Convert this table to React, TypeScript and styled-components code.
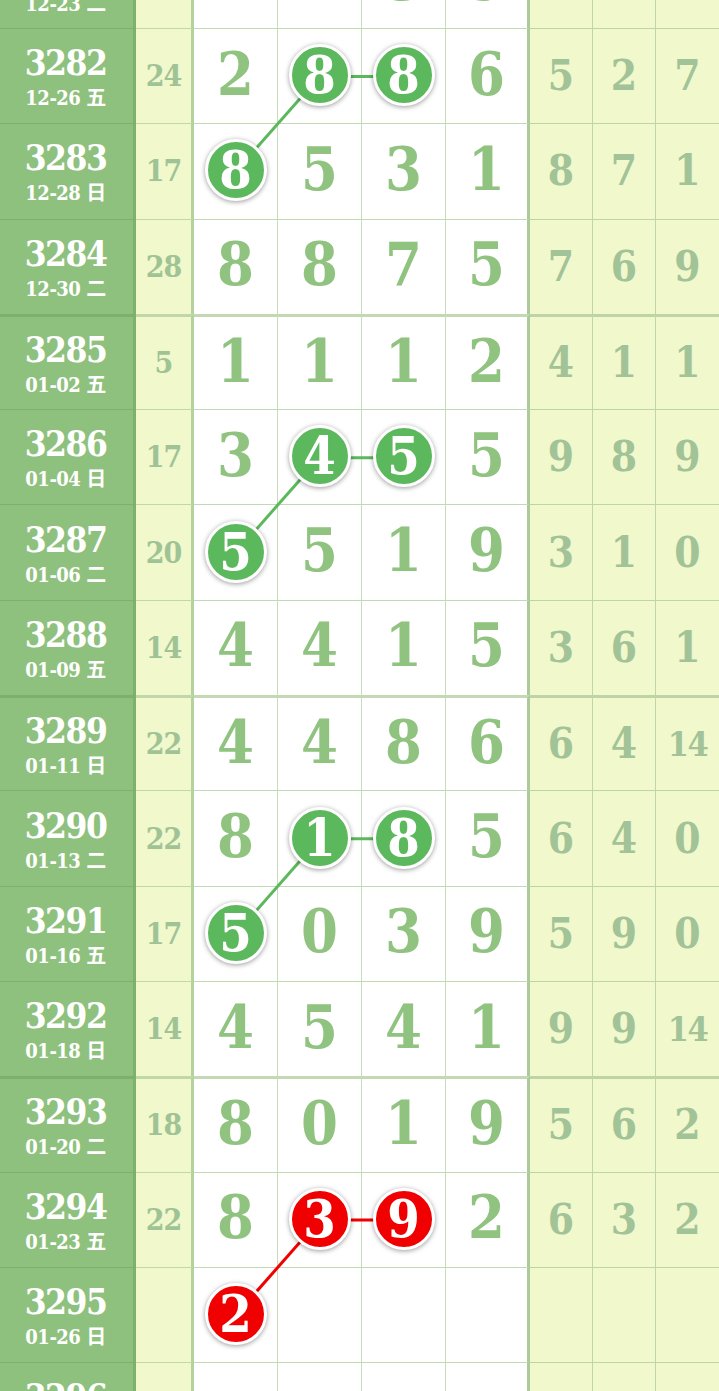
import styled, { createGlobalStyle } from "styled-components"

const ROW_H = 95.3
const COLS = { issue: 136, sum: 58, digit: 84, rest: 63 }
const DIGIT_LEFT = COLS.issue + COLS.sum

type Tone = "green" | "red"

interface IRow {
  no: number
  date: string
  sum?: number
  digits: (number | null)[]
  hits?: number[]
  tone?: Tone
  rest: (number | null)[]
}

const rows: IRow[] = [
  { no: 3281, date: "12-23 二", digits: [null, null, 3, 9], rest: [null, null, null] },
  { no: 3282, date: "12-26 五", sum: 24, digits: [2, 8, 8, 6], hits: [1, 2], tone: "green", rest: [5, 2, 7] },
  { no: 3283, date: "12-28 日", sum: 17, digits: [8, 5, 3, 1], hits: [0], tone: "green", rest: [8, 7, 1] },
  { no: 3284, date: "12-30 二", sum: 28, digits: [8, 8, 7, 5], rest: [7, 6, 9] },
  { no: 3285, date: "01-02 五", sum: 5, digits: [1, 1, 1, 2], rest: [4, 1, 1] },
  { no: 3286, date: "01-04 日", sum: 17, digits: [3, 4, 5, 5], hits: [1, 2], tone: "green", rest: [9, 8, 9] },
  { no: 3287, date: "01-06 二", sum: 20, digits: [5, 5, 1, 9], hits: [0], tone: "green", rest: [3, 1, 0] },
  { no: 3288, date: "01-09 五", sum: 14, digits: [4, 4, 1, 5], rest: [3, 6, 1] },
  { no: 3289, date: "01-11 日", sum: 22, digits: [4, 4, 8, 6], rest: [6, 4, 14] },
  { no: 3290, date: "01-13 二", sum: 22, digits: [8, 1, 8, 5], hits: [1, 2], tone: "green", rest: [6, 4, 0] },
  { no: 3291, date: "01-16 五", sum: 17, digits: [5, 0, 3, 9], hits: [0], tone: "green", rest: [5, 9, 0] },
  { no: 3292, date: "01-18 日", sum: 14, digits: [4, 5, 4, 1], rest: [9, 9, 14] },
  { no: 3293, date: "01-20 二", sum: 18, digits: [8, 0, 1, 9], rest: [5, 6, 2] },
  { no: 3294, date: "01-23 五", sum: 22, digits: [8, 3, 9, 2], hits: [1, 2], tone: "red", rest: [6, 3, 2] },
  { no: 3295, date: "01-26 日", digits: [2, null, null, null], hits: [0], tone: "red", rest: [null, null, null] },
  { no: 3296, date: "01-28 二", digits: [null, null, null, null], rest: [null, null, null] },
]

const toneColor: Record<Tone, string> = {
  green: "#5cb85c",
  red: "#f00000",
}

const GlobalStyle = createGlobalStyle`
  html, body {
    margin: 0;
    padding: 0;
    background: #fff;
    overflow: hidden;
  }
  body {
    font-family: "DejaVu Serif Condensed", "DejaVu Serif", "Noto Sans CJK SC", serif;
  }
`

const Viewport = styled.div`
  width: 719px;
  height: 1391px;
  overflow: hidden;
`

/* page is scrolled so that row 3281 is mostly above the fold */
const Chart = styled.div`
  position: relative;
  margin-top: -67.3px;
`

const Row = styled.div<{ $groupStart: boolean }>`
  display: grid;
  grid-template-columns: ${COLS.issue}px ${COLS.sum}px repeat(4, ${COLS.digit}px) repeat(3, ${COLS.rest}px);
  height: ${ROW_H}px;
  --line: ${({ $groupStart }) => ($groupStart ? "3px" : "1px")};
`

const Cell = styled.div`
  box-sizing: border-box;
  display: flex;
  align-items: center;
  justify-content: center;
  font-weight: 700;
  line-height: 1;
`

const IssueCell = styled(Cell)`
  flex-direction: column;
  gap: 8px;
  background: #8fc17e;
  color: #fff;
  border-top: var(--line) solid #7cb06b;
  border-right: 3px solid #7eb16d;
  padding: 3px 2px 2px 0;
`

const IssueNo = styled.span`
  font-size: 35px;
  letter-spacing: -1.5px;
`

const IssueDate = styled.span`
  font-size: 20px;
  white-space: nowrap;
  letter-spacing: -0.5px;
`

const SumCell = styled(Cell)`
  background: #f0f8cc;
  color: #a0c396;
  font-size: 30px;
  letter-spacing: -1px;
  border-top: var(--line) solid #c0d7aa;
  border-right: 3px solid #b4d19f;
`

const DigitCell = styled(Cell)<{ $last: boolean }>`
  background: #fff;
  color: #8fc37f;
  font-size: 59px;
  padding-bottom: 4px;
  border-top: var(--line) solid #c2d9b4;
  border-right: ${({ $last }) => ($last ? "3px solid #abc99b" : "1px solid #c6dcba")};
`

const RestCell = styled(Cell)<{ $wide: boolean }>`
  background: #f0f8cc;
  color: #a2c398;
  font-size: ${({ $wide }) => ($wide ? "34px" : "42px")};
  letter-spacing: ${({ $wide }) => ($wide ? "-1.5px" : "0")};
  border-top: var(--line) solid #bcd4a6;
  border-right: 1px solid #c0d6aa;
  &:last-child {
    border-right: none;
  }
`

const Ball = styled.span<{ $tone: Tone }>`
  position: relative;
  z-index: 2;
  width: 56px;
  height: 56px;
  margin-top: 2px;
  border-radius: 50%;
  border: 3px solid #fff;
  background: ${({ $tone }) => toneColor[$tone]};
  box-shadow: 0 1px 5px rgba(0, 0, 0, 0.4);
  color: #fff;
  font-size: 52px;
  display: flex;
  align-items: center;
  justify-content: center;
`

const Links = styled.svg`
  position: absolute;
  top: 0;
  left: 0;
  z-index: 1;
  pointer-events: none;
`

const center = (rowIdx: number, col: number) => {
  const border = rowIdx % 4 === 0 ? 3 : 1
  return {
    x: DIGIT_LEFT + col * COLS.digit + (COLS.digit - 1) / 2,
    y: rowIdx * ROW_H + border + (ROW_H - border) / 2,
  }
}

const buildLinks = () => {
  const segs: { x1: number; y1: number; x2: number; y2: number; tone: Tone }[] = []
  rows.forEach((row, i) => {
    if (!row.hits || !row.tone) return
    const tone = row.tone
    for (let k = 1; k < row.hits.length; k++) {
      const a = center(i, row.hits[k - 1])
      const b = center(i, row.hits[k])
      segs.push({ x1: a.x, y1: a.y, x2: b.x, y2: b.y, tone })
    }
    const next = rows[i + 1]
    if (next?.hits?.length && row.hits.length > 1) {
      const a = center(i, row.hits[0])
      const b = center(i + 1, next.hits[next.hits.length - 1])
      segs.push({ x1: a.x, y1: a.y, x2: b.x, y2: b.y, tone })
    }
  })
  return segs
}

const App: React.FC = () => {
  const segs = buildLinks()
  return (
    <Viewport>
      <GlobalStyle />
      <Chart>
        {rows.map((row, i) => (
          <Row key={row.no} $groupStart={i % 4 === 0}>
            <IssueCell>
              <IssueNo>{row.no}</IssueNo>
              <IssueDate>{row.date}</IssueDate>
            </IssueCell>
            <SumCell>{row.sum ?? ""}</SumCell>
            {row.digits.map((d, c) => (
              <DigitCell key={c} $last={c === 3}>
                {row.hits?.includes(c) && row.tone ? (
                  <Ball $tone={row.tone}>{d}</Ball>
                ) : (
                  d ?? ""
                )}
              </DigitCell>
            ))}
            {row.rest.map((r, c) => (
              <RestCell key={c} $wide={r !== null && r > 9}>
                {r ?? ""}
              </RestCell>
            ))}
          </Row>
        ))}
        <Links width={719} height={rows.length * ROW_H}>
          {segs.map((s, k) => (
            <line key={k} {...s} stroke={toneColor[s.tone]} strokeWidth={3} />
          ))}
        </Links>
      </Chart>
    </Viewport>
  )
}

export default App
